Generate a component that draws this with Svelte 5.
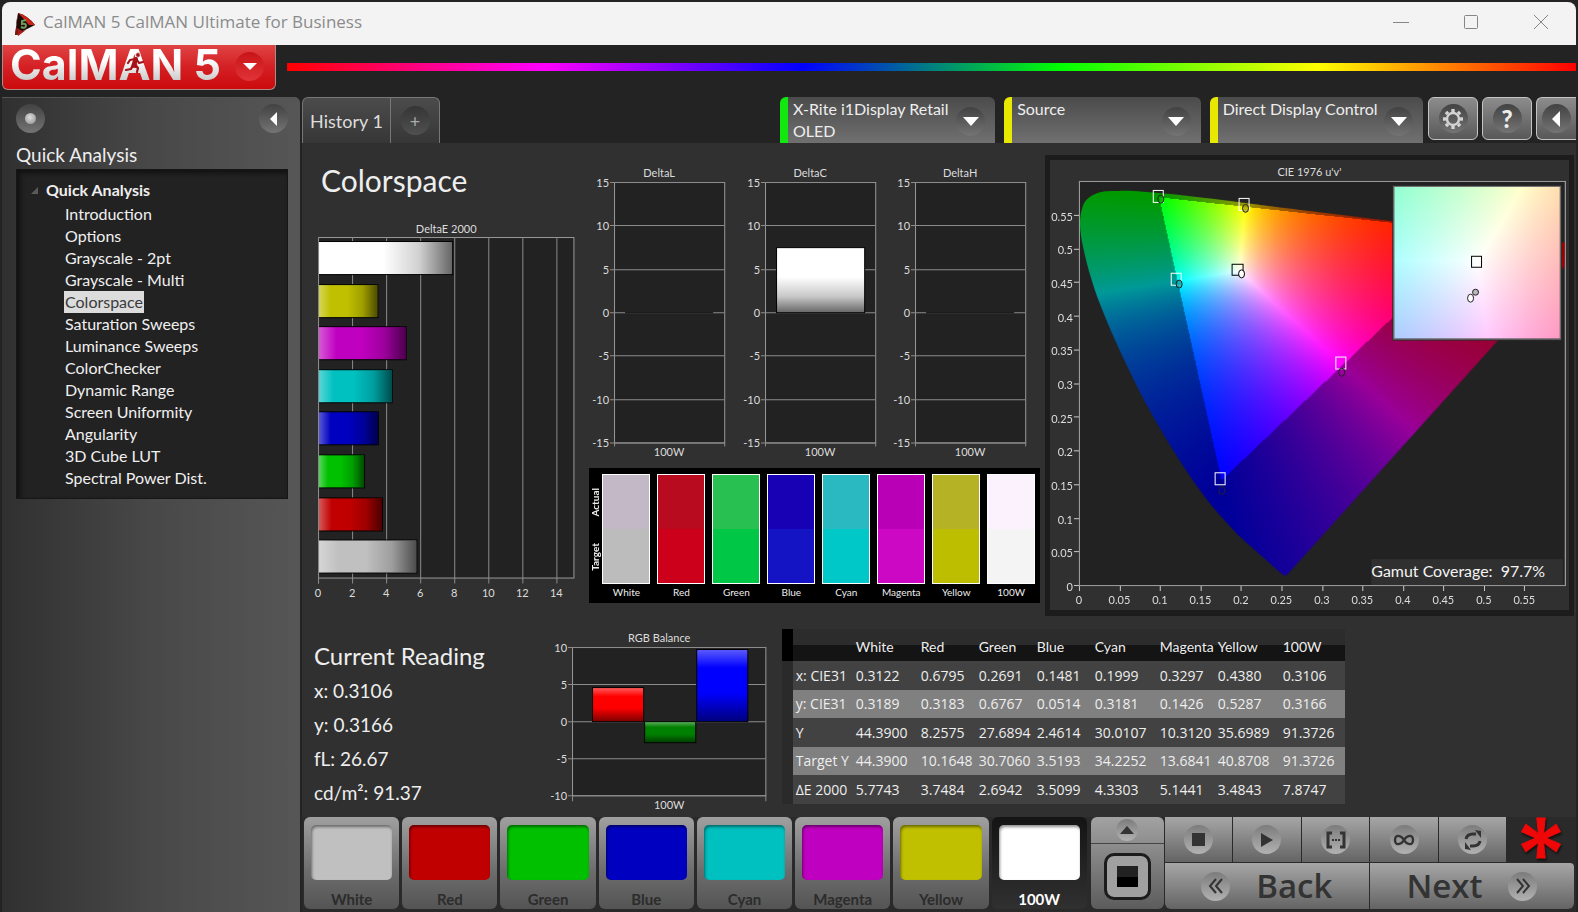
<script lang="ts">
  import { onMount } from "svelte";

  const pages = [
    "Introduction", "Options", "Grayscale - 2pt", "Grayscale - Multi", "Colorspace",
    "Saturation Sweeps", "Luminance Sweeps", "ColorChecker", "Dynamic Range",
    "Screen Uniformity", "Angularity", "3D Cube LUT", "Spectral Power Dist.",
  ];
  let page = $state("Colorspace");

  const patches = [
    { name: "White", color: "#c0c0c0", actual: "#c3b9c6", target: "#bcbcbc" },
    { name: "Red", color: "#c00000", actual: "#b90b20", target: "#cc001b" },
    { name: "Green", color: "#00c000", actual: "#29c052", target: "#00c846" },
    { name: "Blue", color: "#0000c0", actual: "#1800b4", target: "#1414c4" },
    { name: "Cyan", color: "#00c0c0", actual: "#2bb9c1", target: "#00c8c8" },
    { name: "Magenta", color: "#c000c0", actual: "#b900b6", target: "#cc08c4" },
    { name: "Yellow", color: "#c0c000", actual: "#b6b226", target: "#bebe00" },
    { name: "100W", color: "#ffffff", actual: "#fcf2fe", target: "#f4f4f4" },
  ];
  let patch = $state("100W");

  const rows = [
    ["x: CIE31", "0.3122", "0.6795", "0.2691", "0.1481", "0.1999", "0.3297", "0.4380", "0.3106"],
    ["y: CIE31", "0.3189", "0.3183", "0.6767", "0.0514", "0.3181", "0.1426", "0.5287", "0.3166"],
    ["Y", "44.3900", "8.2575", "27.6894", "2.4614", "30.0107", "10.3120", "35.6989", "91.3726"],
    ["Target Y", "44.3900", "10.1648", "30.7060", "3.5193", "34.2252", "13.6841", "40.8708", "91.3726"],
    ["ΔE 2000", "5.7743", "3.7484", "2.6942", "3.5099", "4.3303", "5.1441", "3.4843", "7.8747"],
  ];

  // bottom bar is the first patch, top bar the last
  const deltaE = patches.map((p, i) => ({ ...p, value: Number(rows[4][i + 1]) })).reverse();

  const deltas = [
    { title: "DeltaL", value: 0 },
    { title: "DeltaC", value: 7.5 },
    { title: "DeltaH", value: 0 },
  ];
  const deltaTicks = [15, 10, 5, 0, -5, -10, -15];
  const dy = (v: number) => 18 + Math.round(((15 - v) * 260) / 30);

  const balance = [
    { id: "r", color: "#ff0000", value: 4.6 },
    { id: "g", color: "#008000", value: -2.8 },
    { id: "b", color: "#0000ff", value: 9.7 },
  ];
  const by = (v: number) => 23 + Math.round(((10 - v) * 148) / 20);

  const devices = [
    { lines: ["X-Rite i1Display Retail", "OLED"], color: "#10e810", grow: 216 },
    { lines: ["Source"], color: "#e8e800", grow: 195 },
    { lines: ["Direct Display Control"], color: "#e8e800", grow: 214 },
  ];

  // CIE 1976 plot: both axes run 0 - 0.6
  const W = 487;
  const H = 405;
  const cx = (u: number) => 29 + (u / 0.6) * W;
  const cy = (v: number) => 22 + H - (v / 0.6) * H;
  const steps = Array.from({ length: 12 }, (_, i) => Math.round(i * 5) / 100);

  const locus = [
    [0.2569, 0.0166], [0.2522, 0.0169], [0.2347, 0.035], [0.2161, 0.0549], [0.1877, 0.0871],
    [0.1441, 0.151], [0.0828, 0.2708], [0.0282, 0.4117], [0.0035, 0.5131], [0.0046, 0.5638],
    [0.0231, 0.5837], [0.0501, 0.5868], [0.0792, 0.5856], [0.1127, 0.5821], [0.1531, 0.5766],
    [0.2026, 0.5694], [0.2623, 0.5604], [0.4035, 0.5393], [0.5203, 0.5219], [0.6234, 0.5065],
  ];
  const targets = [
    [0.0986, 0.5777], [0.2045, 0.5655], [0.1203, 0.4545], [0.3245, 0.3305], [0.1745, 0.1583],
  ];
  const measured = [
    [0.1011, 0.5745, "#00a000"], [0.2057, 0.5608, "#a09a00"],
    [0.1237, 0.4483, "#00a0a0"], [0.3245, 0.3175, "#a000a0"], [0.1765, 0.142, "#0000a0"],
  ];

  function xyToRgb(x: number, y: number) {
    const X = x / y;
    const Z = (1 - x - y) / y;
    return [
      2.4935 * X - 0.9314 - 0.4027 * Z,
      -0.8295 * X + 1.7627 + 0.0236 * Z,
      0.0358 * X - 0.0762 + 0.9569 * Z,
    ];
  }

  function paint(canvas: HTMLCanvasElement, toXy: (px: number, py: number) => number[]) {
    const ctx = canvas.getContext("2d")!;
    const img = ctx.createImageData(canvas.width, canvas.height);
    let i = 0;
    for (let py = 0; py < canvas.height; py++) {
      for (let px = 0; px < canvas.width; px++) {
        const [x, y] = toXy(px, py);
        const rgb = xyToRgb(x, y);
        const max = Math.max(...rgb);
        const dim = Math.min(...rgb) < -0.002 ? 0.6 : 1;
        for (const c of rgb) img.data[i++] = (Math.max(0, c) / max) * 255 * dim;
        img.data[i++] = 255;
      }
    }
    ctx.putImageData(img, 0, 0);
    return ctx;
  }

  let diagram: HTMLCanvasElement;
  let inset: HTMLCanvasElement;

  onMount(() => {
    const ctx = paint(diagram, (px, py) => {
      const u = (px / W) * 0.6;
      const v = Math.max(0.001, 0.6 - (py / H) * 0.6);
      const d = 6 * u - 16 * v + 12;
      return [(9 * u) / d, (4 * v) / d];
    });
    // keep only what lies inside the spectral locus
    const pts = locus.map(([u, v]) => [(u / 0.6) * W, H - (v / 0.6) * H]);
    ctx.globalCompositeOperation = "destination-in";
    ctx.beginPath();
    ctx.moveTo(pts[0][0], pts[0][1]);
    for (let i = 0; i < pts.length - 1; i++) {
      const p0 = pts[Math.max(0, i - 1)];
      const p1 = pts[i];
      const p2 = pts[i + 1];
      const p3 = pts[Math.min(pts.length - 1, i + 2)];
      ctx.bezierCurveTo(
        p1[0] + (p2[0] - p0[0]) / 6, p1[1] + (p2[1] - p0[1]) / 6,
        p2[0] - (p3[0] - p1[0]) / 6, p2[1] - (p3[1] - p1[1]) / 6,
        p2[0], p2[1],
      );
    }
    ctx.closePath();
    ctx.fill();

    // inset is plain xy around D65
    paint(inset, (px, py) => [0.3127 + (px - 83) / 2870, 0.329 - (py - 75) / 2870]);
  });
</script>

<div class="window">
  <header class="titlebar">
    <svg width="22" height="26" viewBox="0 0 22 26">
      <path d="M4 2 L1 24 L21 14 Q13 4 4 2Z" fill="#1c0a08" />
      <path d="M4 2 Q13 4 21 14 L15 14 L8 6Z" fill="#c8261a" />
      <path d="M4 2 L2 12 L4 24 L1 24Z" fill="#7c1810" />
      <path d="M3 17 L4 25 L12 19 L8 20Z" fill="#a81c14" />
      <path d="M12 9 L8 10 L8 13 Q12 12 12 15 Q11 18 7 16" fill="none" stroke="#6f9a5a" stroke-width="2" />
    </svg>
    <span class="caption">CalMAN 5 CalMAN Ultimate for Business</span>
    <button class="win" aria-label="Minimize"><svg width="16" height="16"><path d="M0 8.5H16" /></svg></button>
    <button class="win" aria-label="Maximize"><svg width="16" height="16"><rect x="1.5" y="1.5" width="13" height="13" rx="1" /></svg></button>
    <button class="win" aria-label="Close"><svg width="16" height="16"><path d="M1 1L15 15M15 1L1 15" /></svg></button>
  </header>

  <div class="brandbar">
    <button class="logo" aria-label="CalMAN 5 menu">
      <span class="brand">CalMAN</span>
      <span class="brand">5</span>
      <svg class="runner" width="20" height="22" viewBox="0 0 20 22" fill="none" stroke="#a3141a" stroke-linecap="round" stroke-linejoin="round">
        <circle cx="13" cy="3" r="2.4" fill="#a3141a" stroke="#f0f0f0" stroke-width="0.8" />
        <path d="M11 7L9 13" stroke-width="4" />
        <path d="M10 7L5 8L3 11M12 8L14 11L18 10M9 13L13 16L12 20M8 13L6 17L1 18" stroke-width="2.2" />
      </svg>
      <span class="knob red"><svg width="16" height="9"><path d="M1 1H15L8 8Z" fill="#fff" /></svg></span>
    </button>
    <div class="rainbow"></div>
  </div>

  <div class="body">
    <aside>
      <div class="side-top">
        <button class="knob" aria-label="Record"><i class="led"></i></button>
        <button class="knob" aria-label="Collapse"><svg width="9" height="16"><path d="M8 1V15L1 8Z" fill="#fff" /></svg></button>
      </div>
      <h2>Quick Analysis</h2>
      <nav>
        <div class="root"><svg width="7" height="7"><path d="M7 0V7H0Z" fill="#5a5a5a" /></svg>Quick Analysis</div>
        <ul>
          {#each pages as p}
            <li><a href="#{p}" class:current={page === p} onclick={() => (page = p)}>{p}</a></li>
          {/each}
        </ul>
      </nav>
    </aside>

    <main>
      <div class="toolbar">
        <div class="tabs">
          <button class="tab">History 1</button>
          <button class="tab add" aria-label="Add tab"><span class="knob dark">+</span></button>
        </div>
        <div class="devices">
          {#each devices as d}
            <button class="device" style="flex-grow: {d.grow}; border-left-color: {d.color}">
              <span>{#each d.lines as line}{line}<br />{/each}</span>
              <span class="knob"><svg width="16" height="9"><path d="M0 0H16L8 9Z" fill="#fff" /></svg></span>
            </button>
          {/each}
        </div>
        <div class="tools">
          <button class="tool" aria-label="Settings"><span class="knob">
            <svg width="22" height="22" viewBox="-11 -11 22 22" fill="none" stroke="#d4d4d4">
              <circle r="6" stroke-width="2.4" />
              {#each [0, 45, 90, 135, 180, 225, 270, 315] as a}
                <path d="M0 -7V-10" stroke-width="3.4" transform="rotate({a})" />
              {/each}
            </svg>
          </span></button>
          <button class="tool" aria-label="Help"><span class="knob help">?</span></button>
          <button class="tool last" aria-label="Collapse toolbar"><span class="knob"><svg width="9" height="16"><path d="M8 0V16L0 8Z" fill="#fff" /></svg></span></button>
        </div>
      </div>

      <section class="upper">
        <div>
          <h1>Colorspace</h1>
          <svg class="chart" viewBox="0 0 284 384">
            <defs>
              <linearGradient id="sheen">
                <stop offset="0" stop-color="#fff" stop-opacity="0.35" />
                <stop offset="0.2" stop-color="#fff" stop-opacity="0" />
                <stop offset="0.48" stop-color="#000" stop-opacity="0" />
                <stop offset="0.75" stop-color="#000" stop-opacity="0.18" />
                <stop offset="1" stop-color="#000" stop-opacity="0.6" />
              </linearGradient>
            </defs>
            <text x="144" y="11" text-anchor="middle">DeltaE 2000</text>
            <rect class="plot" x="16.5" y="15.5" width="255" height="340" />
            {#each [0, 2, 4, 6, 8, 10, 12, 14] as t}
              <path class="grid" d="M{16.5 + t * 17} 15V361" />
              <text x={16 + t * 17} y="374" text-anchor="middle">{t}</text>
            {/each}
            {#each deltaE as b, i}
              <rect x="16.5" y={19.5 + Math.round(i * 42.6)} width={b.value * 17} height="33" fill={b.color} stroke="#000" />
              <rect x="17" y={20 + Math.round(i * 42.6)} width={b.value * 17 - 1} height="32" fill="url(#sheen)" />
            {/each}
            <path class="grid" d="M16.5 15V361" />
          </svg>
        </div>

        <div class="middle">
          <div class="deltas">
            {#each deltas as d}
              <svg class="chart" viewBox="0 0 150 300">
                <defs>
                  <linearGradient id="fade" x2="0" y2="1">
                    <stop offset="0.45" stop-color="#fff" />
                    <stop offset="0.75" stop-color="#c8c8c8" />
                    <stop offset="1" stop-color="#666" />
                  </linearGradient>
                </defs>
                <text x="70" y="13" text-anchor="middle">{d.title}</text>
                <rect class="plot" x="25.5" y="18.5" width="110" height="260" />
                {#each deltaTicks as t}
                  <path class="grid" d="M21 {dy(t) + 0.5}H135" />
                  <text x="20" y={dy(t) + 5} text-anchor="end">{t}</text>
                {/each}
                <path class="grid" d="M25.5 278V282M135.5 278V282" />
                {#if d.value}
                  <rect x="36.5" y={dy(d.value) + 0.5} width="88" height={dy(0) - dy(d.value)} fill="url(#fade)" stroke="#000" />
                {:else}
                  <path d="M36 {dy(0) + 0.5}H124" stroke="#000" />
                {/if}
                <text x="80" y="292" text-anchor="middle">100W</text>
              </svg>
            {/each}
          </div>
          <div class="swatches">
            <div class="side"><span>Actual</span><span>Target</span></div>
            {#each patches as p}
              <figure>
                <div class="pair">
                  <div style="background: {p.actual}"></div>
                  <div style="background: {p.target}"></div>
                </div>
                <figcaption>{p.name}</figcaption>
              </figure>
            {/each}
          </div>
        </div>

        <div class="cie">
          <svg class="chart" viewBox="0 0 520 451">
            <text x="260" y="16" text-anchor="middle">CIE 1976 u'v'</text>
            <rect class="plot" x="29.5" y="21.5" width={W} height={H} />
            <foreignObject x="29" y="22" width={W} height={H}>
              <canvas bind:this={diagram} width={W} height={H}></canvas>
            </foreignObject>
            <rect x="29.5" y="21.5" width={W} height={H} fill="none" stroke="#999" />
            {#each steps as s}
              <path class="tick" d="M{Math.round(cx(s)) + 0.5} 427V432M24 {Math.round(cy(s)) - 0.5}H29" />
              <text x={cx(s)} y="445" text-anchor="middle">{s}</text>
              <text x="23" y={cy(s) + 5} text-anchor="end">{s}</text>
            {/each}
            {#each targets as [u, v]}
              <rect x={Math.round(cx(u)) - 5.5} y={Math.round(cy(v)) - 6.5} width="10" height="12" fill="none" stroke="#fff" />
            {/each}
            {#each measured as [u, v, fill]}
              <ellipse cx={cx(Number(u))} cy={cy(Number(v))} rx="3" ry="4" fill={String(fill)} fill-opacity="0.7" stroke="#222" />
            {/each}
            <rect x={Math.round(cx(0.1965)) - 5.5} y={Math.round(cy(0.4695)) - 5.5} width="11" height="11" fill="none" stroke="#000" />
            <ellipse cx={cx(0.2008)} cy={cy(0.4635)} rx="3" ry="4" fill="#fff" stroke="#000" />

            <rect x="343" y="25" width="170" height="156" fill="#2c2c2c" />
            <foreignObject x="345" y="27" width="166" height="152">
              <canvas bind:this={inset} width="166" height="152"></canvas>
            </foreignObject>
            <rect x="344.5" y="26.5" width="167" height="153" fill="none" stroke="#777" />
            <rect x="422.5" y="96.5" width="10" height="11" fill="none" stroke="#000" />
            <ellipse cx="426.5" cy="132.5" rx="3" ry="3" fill="#b8b8b8" stroke="#222" />
            <ellipse cx="421.5" cy="138.5" rx="3" ry="4" fill="#fff" stroke="#222" />

            <rect x="322" y="400" width="192" height="26" fill="#303030" />
            <text class="gamut" x="322" y="418" xml:space="preserve">Gamut Coverage:  97.7%</text>
          </svg>
        </div>
      </section>

      <section class="lower">
        <div class="reading">
          <h3>Current Reading</h3>
          <p>x: 0.3106</p>
          <p>y: 0.3166</p>
          <p>fL: 26.67</p>
          <p>cd/m²: 91.37</p>
        </div>
        <svg class="chart" viewBox="0 0 228 190">
          <defs>
            <linearGradient id="gloss" x2="0" y2="1">
              <stop offset="0" stop-color="#fff" stop-opacity="0.35" />
              <stop offset="0.25" stop-color="#fff" stop-opacity="0" />
              <stop offset="0.6" stop-color="#000" stop-opacity="0" />
              <stop offset="1" stop-color="#000" stop-opacity="0.5" />
            </linearGradient>
          </defs>
          <text x="112" y="18" text-anchor="middle">RGB Balance</text>
          <rect class="plot" x="25.5" y="23.5" width="193" height="148" />
          {#each [10, 5, 0, -5, -10] as t}
            <path class="grid" d="M21 {by(t) + 0.5}H218" />
            <text x="20" y={by(t) + 5} text-anchor="end">{t}</text>
          {/each}
          <path class="grid" d="M25.5 171V177M218.5 171V177" />
          {#each balance as b, i}
            <rect x={45.5 + i * 52} y={by(Math.max(0, b.value)) + 0.5} width="51" height={Math.abs(by(b.value) - by(0))} fill={b.color} stroke="#000" />
            <rect x={46 + i * 52} y={by(Math.max(0, b.value)) + 1} width="50" height={Math.abs(by(b.value) - by(0)) - 1} fill="url(#gloss)" />
          {/each}
          <text x="122" y="185" text-anchor="middle">100W</text>
        </svg>
        <div class="data">
          <table>
            <colgroup>
              <col class="mark" /><col class="w60" /><col class="w65" /><col class="w58" /><col class="w58" />
              <col class="w58" /><col class="w65" /><col class="w58" /><col class="w65" /><col class="w65" />
            </colgroup>
            <thead>
              <tr>
                <th></th><th></th>
                {#each patches as p}<th scope="col">{p.name}</th>{/each}
              </tr>
            </thead>
            <tbody>
              {#each rows as row}
                <tr>
                  <td></td>
                  {#each row as cell}<td>{cell}</td>{/each}
                </tr>
              {/each}
            </tbody>
          </table>
        </div>
      </section>

      <footer>
        <div class="patches">
          {#each patches as p}
            <button class="patch" class:selected={patch === p.name} onclick={() => (patch = p.name)}>
              <i style="background: {p.color}"></i>
              {p.name}
            </button>
          {/each}
        </div>
        <div class="window-size">
          <button class="up" aria-label="Expand"><span class="knob light small"><svg width="14" height="8"><path d="M0 8H14L7 0Z" fill="#333" /></svg></span></button>
          <button class="size" aria-label="Pattern window"><i></i></button>
        </div>
        <div class="controls">
          <div class="transport">
            <button aria-label="Stop"><span class="knob light"><svg width="13" height="13"><rect width="13" height="13" fill="#333" /></svg></span></button>
            <button aria-label="Play"><span class="knob light"><svg width="13" height="14"><path d="M1 0L13 7L1 14Z" fill="#333" /></svg></span></button>
            <button aria-label="Read series"><span class="knob light"><svg width="20" height="18" fill="none" stroke="#333" stroke-width="3"><path d="M6 2H2V16H6M14 2H18V16H14" /><path d="M6 9H14" stroke-width="2" stroke-dasharray="2 1" /></svg></span></button>
            <button aria-label="Continuous"><span class="knob light"><svg width="22" height="12" fill="none" stroke="#333" stroke-width="2.4"><path d="M11 6C8 1 2 0 2 6S8 11 11 6S20 0 20 6S14 11 11 6Z" /></svg></span></button>
            <button aria-label="Refresh"><span class="knob light"><svg width="20" height="20" viewBox="0 0 20 20" fill="none" stroke="#333" stroke-width="3"><path d="M3 9Q4 4 10 4H13M17 11Q16 16 10 16H7" /><path d="M12 0L18 1V8Z M8 20L2 19V12Z" fill="#333" stroke="none" /></svg></span></button>
            <svg class="star" viewBox="-20 -20 40 40" width="42" height="42">
              {#each [0, 60, 120, 180, 240, 300] as a}
                <path d="M-2 0L-4 -19H4L2 0Z" fill="#f00808" stroke="#f00808" transform="rotate({a})" />
              {/each}
            </svg>
          </div>
          <div class="steps">
            <button><span class="knob light"><svg width="16" height="16" fill="none" stroke="#333" stroke-width="2"><path d="M8 1L2 8L8 15M14 1L8 8L14 15" /></svg></span>Back</button>
            <button class="next">Next<span class="knob light"><svg width="16" height="16" fill="none" stroke="#333" stroke-width="2"><path d="M2 1L8 8L2 15M8 1L14 8L8 15" /></svg></span></button>
          </div>
        </div>
      </footer>
    </main>
  </div>
</div>

<style>
  :global(body) {
    margin: 0;
    background: #1c1c1c;
  }

  .window {
    box-sizing: border-box;
    display: flex;
    flex-direction: column;
    min-height: 100vh;
    padding: 2px 2px 0;
    background: #232323;
    color: #eee;
    font-family: Lato, "Liberation Sans", sans-serif;
  }

  button {
    border: 0;
    padding: 0;
    margin: 0;
    background: none;
    color: inherit;
    font: inherit;
    cursor: pointer;
  }

  h1, h2, h3, p, ul, figure {
    margin: 0;
    padding: 0;
    font-weight: normal;
  }

  .titlebar {
    display: flex;
    align-items: center;
    height: 43px;
    padding-left: 12px;
    background: #f3f3f3;
    border-radius: 8px 8px 0 0;
    color: #8b8b8b;
    font: 17px/40px "Open Sans", sans-serif;
  }
  .caption {
    flex: 1;
    height: 43px;
    margin-left: 7px;
  }
  .win {
    width: 70px;
    height: 43px;
  }
  .win svg {
    fill: none;
    stroke: #858585;
  }

  .brandbar {
    display: flex;
    align-items: flex-start;
    height: 52px;
  }
  .logo {
    position: relative;
    display: flex;
    align-items: center;
    gap: 10px;
    box-sizing: border-box;
    width: 274px;
    height: 45px;
    padding: 0 0 6px 7px;
    border: 1px solid #b08a84;
    border-top: 0;
    border-radius: 0 0 6px 6px;
    background: linear-gradient(#e04444, #d42024 50%, #cc0a0c);
  }
  .brand {
    font: 700 43px/38px Inter, sans-serif;
    background: linear-gradient(#fff 40%, #c4c4c4);
    background-clip: text;
    color: transparent;
  }
  .runner {
    position: absolute;
    left: 122px;
    top: 7px;
  }
  .logo .knob {
    margin: 4px 11px 0 auto;
  }
  .rainbow {
    flex: 1;
    height: 8px;
    margin: 18px 0 0 11px;
    background: linear-gradient(90deg, #f00, #f0f 20%, #00f 40%, #0f0 60%, #ff0 80%, #f00);
  }

  .knob {
    display: flex;
    flex: none;
    align-items: center;
    justify-content: center;
    width: 29px;
    height: 29px;
    border-radius: 50%;
    background: linear-gradient(#424242, #747474);
  }
  .knob.red {
    background: linear-gradient(#c81418, #e03438);
  }
  .knob.dark {
    background: linear-gradient(#353535, #505050);
    color: #aaa;
    font-size: 18px;
  }
  .knob.light {
    background: linear-gradient(#7c7c7c, #b2b2b2);
  }
  .knob.small {
    width: 22px;
    height: 22px;
  }
  .led {
    width: 11px;
    height: 11px;
    border-radius: 50%;
    background: radial-gradient(circle at 45% 40%, #ddd, #8a8a8a);
  }

  .body {
    display: flex;
    flex: 1;
  }

  aside {
    box-sizing: border-box;
    width: 298px;
    padding: 7px 12px 0 14px;
    border-radius: 0 6px 0 0;
    background: linear-gradient(90deg, #303030, #484848 50%, #565656);
    box-shadow: inset 0 1px #555;
  }
  .side-top {
    display: flex;
    justify-content: space-between;
  }
  aside h2 {
    margin-top: 11px;
    font-size: 19px;
    line-height: 22px;
  }
  nav {
    margin-top: 3px;
    padding: 9px 0 9px 14px;
    border: 1px solid #161616;
    background: #222;
    box-shadow: inset 3px 3px 5px #111;
    font-size: 16px;
  }
  .root {
    display: flex;
    align-items: center;
    gap: 8px;
    margin-bottom: 2px;
    font-weight: bold;
    line-height: 22px;
  }
  ul {
    list-style: none;
    padding-left: 33px;
  }
  li {
    height: 22px;
    line-height: 22px;
  }
  a {
    display: inline-block;
    padding: 0 1px;
    color: #f0f0f0;
    text-decoration: none;
  }
  a.current {
    background: #dcdcdc;
    color: #3a3a3a;
  }

  main {
    display: flex;
    flex-direction: column;
    flex: 1;
    min-width: 0;
    margin-left: 2px;
    background: #303030;
  }

  .toolbar {
    display: flex;
    justify-content: space-between;
    height: 46px;
    background: #232323;
  }
  .tabs {
    display: flex;
    box-sizing: border-box;
    height: 46px;
    border: 1px solid #777;
    border-bottom: 0;
    border-radius: 6px 6px 0 0;
    background: linear-gradient(#4c4c4c, #363636);
  }
  .tab {
    width: 87px;
    font-size: 18px;
    color: #ddd;
  }
  .add {
    display: flex;
    align-items: center;
    justify-content: center;
    width: 49px;
    border-left: 1px solid #777;
  }
  .devices {
    display: flex;
    flex: 0 1 643px;
    gap: 9px;
    margin-left: auto;
    margin-right: 5px;
  }
  .device {
    display: flex;
    flex: 1 1 0;
    align-items: flex-start;
    justify-content: space-between;
    box-sizing: border-box;
    padding: 1px 10px 0 5px;
    border-left: 8px solid;
    border-radius: 6px 6px 0 0;
    background: linear-gradient(#4b4b4b, #707070);
    font-size: 16px;
    line-height: 22px;
    text-align: left;
    white-space: nowrap;
  }
  .device .knob {
    margin-top: 9px;
  }
  .tools {
    display: flex;
    gap: 4px;
  }
  .tool {
    display: flex;
    align-items: center;
    justify-content: center;
    box-sizing: border-box;
    width: 50px;
    height: 43px;
    border: 1px solid #c4c4c4;
    border-radius: 6px;
    background: linear-gradient(#8c8c8c, #585858);
  }
  .tool.last {
    width: 40px;
    border-right: 0;
    border-radius: 6px 0 0 6px;
  }
  .help {
    color: #eee;
    font-size: 24px;
    font-weight: 900;
  }

  .upper {
    display: grid;
    grid-template-columns: 284fr 458fr 530fr;
  }
  h1 {
    padding: 17px 0 22px 19px;
    font-size: 30px;
    line-height: 40px;
  }
  .chart {
    display: block;
    width: 100%;
  }
  .chart text {
    fill: #ddd;
    font-size: 11px;
  }
  .chart .gamut {
    fill: #f4f4f4;
    font-size: 16px;
  }
  .plot {
    fill: #222;
    stroke: #999;
  }
  .grid {
    stroke: #8c8c8c;
    fill: none;
  }
  .tick {
    stroke: #ccc;
  }
  canvas {
    display: block;
  }

  .middle {
    padding: 21px 5px 0 3px;
  }
  .deltas {
    display: grid;
    grid-template-columns: repeat(3, 1fr);
  }
  .swatches {
    display: flex;
    gap: 7px;
    margin-top: 4px;
    padding: 6px 5px 3px 1px;
    background: #000;
    font-size: 10px;
    font-weight: bold;
  }
  .side {
    display: flex;
    flex-direction: column;
    justify-content: space-around;
    width: 11px;
    height: 110px;
    margin-right: -6px;
  }
  .side span {
    writing-mode: vertical-rl;
    transform: rotate(180deg);
    line-height: 11px;
  }
  figure {
    flex: 1 1 0;
    text-align: center;
    min-width: 0;
  }
  .pair {
    display: grid;
    grid-template-rows: 1fr 1fr;
    height: 108px;
    border: 1px solid #fff;
  }
  figcaption {
    line-height: 16px;
  }

  .cie {
    margin: 12px 2px 0 0;
    border: 5px solid #1c1c1c;
    border-bottom-width: 6px;
  }

  .lower {
    display: grid;
    grid-template-columns: 245fr 228fr 799fr;
    align-items: start;
    padding-top: 8px;
  }
  .reading {
    padding: 14px 0 0 12px;
    font-size: 19px;
    line-height: 34px;
  }
  .reading h3 {
    font-size: 24px;
    line-height: 36px;
  }
  .data {
    padding: 5px 0 0 6px;
  }
  table {
    width: 562px;
    table-layout: fixed;
    border-collapse: collapse;
    font: 14px "Open Sans", sans-serif;
  }
  .mark { width: 11px; }
  .w58 { width: 58px; }
  .w60 { width: 60px; }
  .w65 { width: 65px; }
  th, td {
    padding: 0 0 0 3px;
    text-align: left;
    font-weight: normal;
    white-space: nowrap;
  }
  th {
    height: 28px;
    padding-top: 4px;
    background: linear-gradient(#2c2c2c 50%, #141414 50%);
    font-family: Lato, sans-serif;
  }
  th:first-child {
    background: #000;
  }
  td {
    height: 29px;
    background: #424242;
  }
  tr:nth-child(even) td {
    height: 28px;
    background: #808080;
  }
  tbody tr td:first-child, tbody tr:nth-child(even) td:first-child {
    background: #2a2a2a;
  }

  footer {
    display: flex;
    gap: 4px;
    margin-top: auto;
    padding: 0 2px 3px;
    background: #2a2a2a;
  }
  .patches {
    display: flex;
    flex: 784;
    gap: 3px;
  }
  .patch {
    display: flex;
    flex: 1 1 0;
    flex-direction: column;
    align-items: center;
    justify-content: flex-start;
    gap: 2px;
    box-sizing: border-box;
    height: 92px;
    padding: 8px 7px 0;
    border-radius: 6px;
    background: linear-gradient(#a0a0a0, #6c6c6c 60%, #545454);
    color: #2c2c2c;
    font-size: 15px;
    font-weight: bold;
    line-height: 34px;
    white-space: nowrap;
  }
  .patch i {
    flex: none;
    width: 100%;
    height: 55px;
    border-radius: 5px;
    box-shadow: inset 1px 2px 3px rgba(0, 0, 0, 0.45);
  }
  .patch.selected {
    background: linear-gradient(#141414, #303030);
    color: #fff;
  }

  .window-size {
    display: flex;
    flex: 73;
    flex-direction: column;
    border-radius: 6px;
    background: linear-gradient(#a2a2a2, #5c5c5c);
  }
  .up {
    display: flex;
    align-items: center;
    justify-content: center;
    height: 27px;
    border-bottom: 1px solid #444;
  }
  .size {
    display: flex;
    flex: 1;
    align-items: center;
    justify-content: center;
  }
  .size i {
    width: 21px;
    height: 21px;
    border: 10px solid #a0a0a0;
    border-radius: 7px;
    outline: 3px solid #1c1c1c;
    background: linear-gradient(#222 50%, #000 50%) padding-box;
  }

  .controls {
    display: flex;
    flex: 410;
    flex-direction: column;
    gap: 1px;
    margin-left: -3px;
  }
  .transport {
    display: grid;
    grid-template-columns: repeat(5, 68fr) 67fr;
    gap: 1px;
    height: 45px;
  }
  .transport button, .steps button {
    display: flex;
    align-items: center;
    justify-content: center;
    background: linear-gradient(#a6a6a6, #646464);
  }
  .star {
    justify-self: center;
    filter: drop-shadow(1px 2px 1px #111);
  }
  .steps {
    display: grid;
    grid-template-columns: 1fr 1fr;
    gap: 1px;
    height: 46px;
    color: #333;
    font: 600 33px/44px "Open Sans", sans-serif;
  }
  .steps button {
    gap: 26px;
    border-radius: 0 0 0 6px;
  }
  .steps .next {
    border-radius: 0 4px 6px 0;
  }
</style>
